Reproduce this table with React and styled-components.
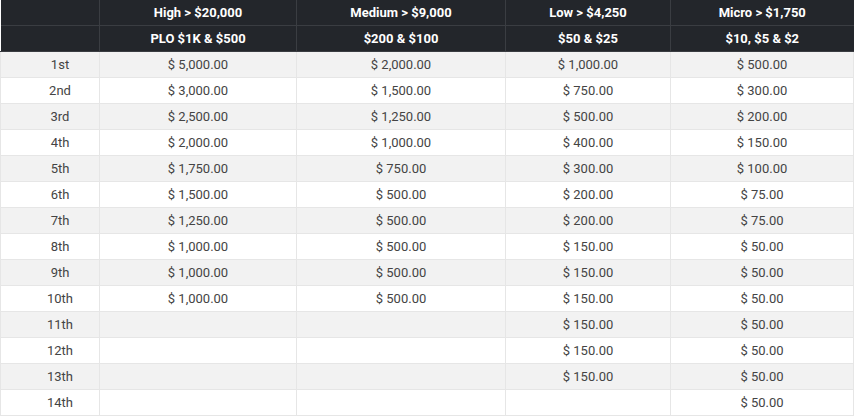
import styled, { createGlobalStyle } from 'styled-components';

const GlobalStyle = createGlobalStyle`
  html, body {
    margin: 0;
    padding: 0;
    background: #fff;
  }
`;

const StyledTable = styled.table`
  width: 853px;
  border-collapse: collapse;
  table-layout: fixed;
  font-family: Roboto, 'Liberation Sans', sans-serif;
  font-size: 13px;
`;

const StyledHeadCell = styled.th`
  background: #23262b;
  color: #fff;
  font-weight: 700;
  height: 25px;
  padding: 0;
  text-align: center;
  border: 1px solid #3a3d42;
  border-top: none;
  &:first-child { border-left: none; }
  &:last-child { border-right: none; }
`;

const StyledRow = styled.tr`
  background: ${({ $odd }) => ($odd ? '#f2f2f2' : '#fff')};
`;

const StyledCell = styled.td`
  height: 25px;
  padding: 0;
  text-align: center;
  color: #444;
  border: 1px solid #e6e6e6;
  &:first-child { padding-left: 20px; }
`;

const widths = [99, 197, 209, 165, 183];

const tiers = [
  { name: 'High > $20,000', stakes: 'PLO $1K & $500' },
  { name: 'Medium > $9,000', stakes: '$200 & $100' },
  { name: 'Low > $4,250', stakes: '$50 & $25' },
  { name: 'Micro > $1,750', stakes: '$10, $5 & $2' },
];

const prizes = [
  ['1st', '$ 5,000.00', '$ 2,000.00', '$ 1,000.00', '$ 500.00'],
  ['2nd', '$ 3,000.00', '$ 1,500.00', '$ 750.00', '$ 300.00'],
  ['3rd', '$ 2,500.00', '$ 1,250.00', '$ 500.00', '$ 200.00'],
  ['4th', '$ 2,000.00', '$ 1,000.00', '$ 400.00', '$ 150.00'],
  ['5th', '$ 1,750.00', '$ 750.00', '$ 300.00', '$ 100.00'],
  ['6th', '$ 1,500.00', '$ 500.00', '$ 200.00', '$ 75.00'],
  ['7th', '$ 1,250.00', '$ 500.00', '$ 200.00', '$ 75.00'],
  ['8th', '$ 1,000.00', '$ 500.00', '$ 150.00', '$ 50.00'],
  ['9th', '$ 1,000.00', '$ 500.00', '$ 150.00', '$ 50.00'],
  ['10th', '$ 1,000.00', '$ 500.00', '$ 150.00', '$ 50.00'],
  ['11th', '', '', '$ 150.00', '$ 50.00'],
  ['12th', '', '', '$ 150.00', '$ 50.00'],
  ['13th', '', '', '$ 150.00', '$ 50.00'],
  ['14th', '', '', '', '$ 50.00'],
];

const App = () => {
  return (
    <>
      <GlobalStyle />
      <StyledTable>
        <colgroup>
          {widths.map((w, i) => (
            <col key={i} style={{ width: w }} />
          ))}
        </colgroup>
        <thead>
          <tr>
            <StyledHeadCell />
            {tiers.map((t) => (
              <StyledHeadCell key={t.name}>{t.name}</StyledHeadCell>
            ))}
          </tr>
          <tr>
            <StyledHeadCell />
            {tiers.map((t) => (
              <StyledHeadCell key={t.stakes}>{t.stakes}</StyledHeadCell>
            ))}
          </tr>
        </thead>
        <tbody>
          {prizes.map((row, i) => (
            <StyledRow key={row[0]} $odd={i % 2 === 0}>
              {row.map((cell, j) => (
                <StyledCell key={j}>{cell}</StyledCell>
              ))}
            </StyledRow>
          ))}
        </tbody>
      </StyledTable>
    </>
  );
};

export default App;
